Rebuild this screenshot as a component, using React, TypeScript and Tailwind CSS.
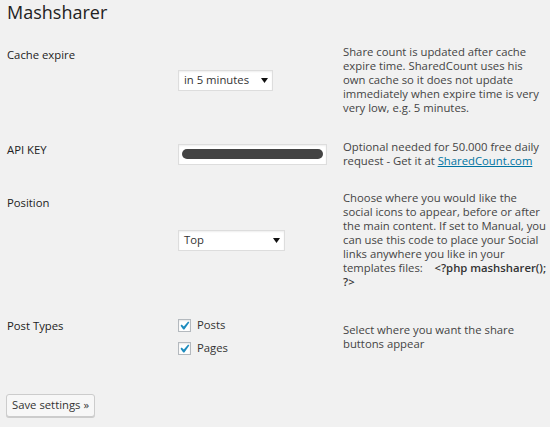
import { ReactNode } from "react";

function Caret() {
  return (
    <svg width="7" height="5" viewBox="0 0 7 5" className="shrink-0">
      <path d="M0 0h7L3.5 5z" fill="#111" />
    </svg>
  );
}

function FakeSelect({ value, width }: { value: string; width: string }) {
  return (
    <div
      className={`${width} h-[21px] flex items-center justify-between pl-[5px] pr-[4px] bg-white border border-[#dddddd] shadow-[inset_0_1px_2px_rgba(0,0,0,0.07)] text-[11.3px] text-[#333]`}
    >
      <span>{value}</span>
      <Caret />
    </div>
  );
}

function Check({ label }: { label: string }) {
  return (
    <div className="flex items-center gap-[6px] h-[18px]">
      <div className="w-[13px] h-[13px] bg-white border border-[#b4b9be] shadow-[inset_0_1px_2px_rgba(0,0,0,0.1)] flex items-center justify-center">
        <svg width="11" height="11" viewBox="4 3 13 13">
          <path d="M14.83 4.89l1.34.94-5.81 8.38H9.02L5.78 9.67l1.34-1.25 2.57 2.4z" fill="#1e8cbe" />
        </svg>
      </div>
      <span className="text-[11.3px] text-[#333]">{label}</span>
    </div>
  );
}

function Row({ label, control, help, className = "", labelPad = "pt-[3px]" }: { label: string; control: ReactNode; help: ReactNode; className?: string; labelPad?: string }) {
  return (
    <div className={`grid grid-cols-[171px_165px_1fr] ${className}`}>
      <div className={`self-start ${labelPad} text-[11.3px] leading-[14px] text-[#222]`}>{label}</div>
      <div className="self-center">{control}</div>
      <div className="self-center text-[11.3px] leading-[14px] text-[#444] whitespace-nowrap">{help}</div>
    </div>
  );
}

export default function App() {
  return (
    <div className="w-[550px] h-[427px] bg-[#f1f1f1] pl-[7px] overflow-hidden" style={{ fontFamily: '"Open Sans", "Liberation Sans", sans-serif' }}>
      <h2 className="text-[18px] leading-[24px] text-[#222]">Mashsharer</h2>

      <Row
        className="mt-[21px]"
        label="Cache expire"
        control={<FakeSelect value="in 5 minutes" width="w-[95px]" />}
        help={
          <>
            Share count is updated after cache
            <br />
            expire time. SharedCount uses his
            <br />
            own cache so it does not update
            <br />
            immediately when expire time is very
            <br />
            very low, e.g. 5 minutes.
          </>
        }
      />

      <Row
        className="mt-[25px]"
        label="API KEY"
        control={
          <div className="w-[149px] h-[21px] bg-white border border-[#dddddd] shadow-[inset_0_1px_2px_rgba(0,0,0,0.07)] flex items-center px-[3px]">
            <div className="h-[10px] w-full rounded-full bg-[#444] blur-[0.4px]" />
          </div>
        }
        help={
          <>
            Optional needed for 50.000 free daily
            <br />
            request - Get it at{" "}
            <a href="#" className="text-[#0074a2] underline">
              SharedCount.com
            </a>
          </>
        }
      />

      <Row
        className="mt-[23px]"
        labelPad="pt-[5px]"
        label="Position"
        control={<FakeSelect value="Top" width="w-[107px]" />}
        help={
          <>
            Choose where you would like the
            <br />
            social icons to appear, before or after
            <br />
            the main content. If set to Manual, you
            <br />
            can use this code to place your Social
            <br />
            links anywhere you like in your
            <br />
            templates files:&nbsp;&nbsp;&nbsp; <span className="font-semibold text-[#333]">&lt;?php mashsharer();</span>
            <br />
            <span className="font-semibold text-[#333]">?&gt;</span>
          </>
        }
      />

      <Row
        className="mt-[27px]"
        label="Post Types"
        control={
          <div className="flex flex-col gap-[5px]">
            <Check label="Posts" />
            <Check label="Pages" />
          </div>
        }
        help={
          <>
            Select where you want the share
            <br />
            buttons appear
          </>
        }
      />

      <button className="mt-[37px] -ml-px h-[23px] px-[5px] rounded-[3px] border border-[#cccccc] bg-[#f7f7f7] shadow-[0_1px_0_#cccccc] text-[11.3px] text-[#333]">
        Save settings »
      </button>
    </div>
  );
}
